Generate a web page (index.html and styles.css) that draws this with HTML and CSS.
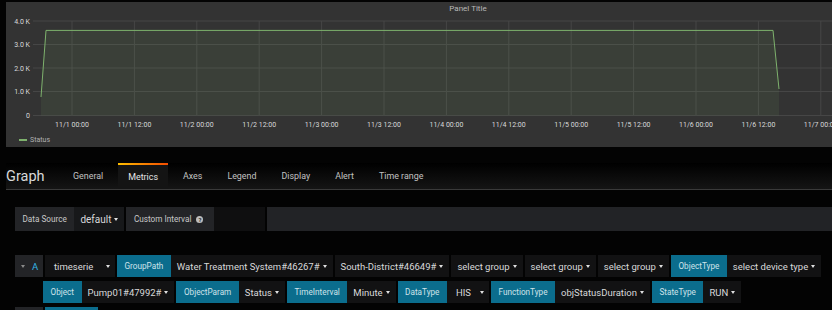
FILE: index.html
```html
<!DOCTYPE html>
<html lang="en">
<head>
    <meta charset="UTF-8">
    <title>Graph - Metrics</title>
    <link rel="stylesheet" href="styles.css">
</head>
<body>
    <div class="panel">
        <div class="panel-title">Panel Title</div>
        <svg class="chart" width="826" height="116" viewBox="0 0 826 116">
            <g class="grid">
                <line x1="27" y1="5" x2="826" y2="5"/>
                <line x1="27" y1="28.5" x2="826" y2="28.5"/>
                <line x1="27" y1="52" x2="826" y2="52"/>
                <line x1="27" y1="75.5" x2="826" y2="75.5"/>
                <line x1="27" y1="99.5" x2="826" y2="99.5"/>
                <line x1="66" y1="5" x2="66" y2="99.5"/>
                <line x1="128.4" y1="5" x2="128.4" y2="99.5"/>
                <line x1="190.8" y1="5" x2="190.8" y2="99.5"/>
                <line x1="253.2" y1="5" x2="253.2" y2="99.5"/>
                <line x1="315.6" y1="5" x2="315.6" y2="99.5"/>
                <line x1="378" y1="5" x2="378" y2="99.5"/>
                <line x1="440.4" y1="5" x2="440.4" y2="99.5"/>
                <line x1="502.8" y1="5" x2="502.8" y2="99.5"/>
                <line x1="565.2" y1="5" x2="565.2" y2="99.5"/>
                <line x1="627.6" y1="5" x2="627.6" y2="99.5"/>
                <line x1="690" y1="5" x2="690" y2="99.5"/>
                <line x1="752.4" y1="5" x2="752.4" y2="99.5"/>
                <line x1="814.8" y1="5" x2="814.8" y2="99.5"/>
            </g>
            <polygon class="series-fill" points="35,99.5 35,81 40,14.4 767,14.4 773,73 773,99.5"/>
            <polyline class="series-line" points="35,81 40,14.4 767,14.4 773,73"/>
            <g class="y-labels">
                <text x="24" y="7.5">4.0 K</text>
                <text x="24" y="31">3.0 K</text>
                <text x="24" y="54.5">2.0 K</text>
                <text x="24" y="78">1.0 K</text>
                <text x="24" y="102">0</text>
            </g>
            <g class="x-labels">
                <text x="66" y="110.5">11/1 00:00</text>
                <text x="128.4" y="110.5">11/1 12:00</text>
                <text x="190.8" y="110.5">11/2 00:00</text>
                <text x="253.2" y="110.5">11/2 12:00</text>
                <text x="315.6" y="110.5">11/3 00:00</text>
                <text x="378" y="110.5">11/3 12:00</text>
                <text x="440.4" y="110.5">11/4 00:00</text>
                <text x="502.8" y="110.5">11/4 12:00</text>
                <text x="565.2" y="110.5">11/5 00:00</text>
                <text x="627.6" y="110.5">11/5 12:00</text>
                <text x="690" y="110.5">11/6 00:00</text>
                <text x="752.4" y="110.5">11/6 12:00</text>
                <text x="814.8" y="110.5">11/7 00:00</text>
            </g>
        </svg>
        <div class="legend"><span class="legend-swatch"></span>Status</div>
    </div>

    <div class="editor">
        <div class="tabs">
            <div class="tabs-title">Graph</div>
            <ul class="tab-list">
                <li>General</li>
                <li class="active">Metrics</li>
                <li>Axes</li>
                <li>Legend</li>
                <li>Display</li>
                <li>Alert</li>
                <li>Time range</li>
            </ul>
        </div>

        <div class="ds-row">
            <div class="gf-pair">
                <span class="gf-label gray">Data Source</span>
                <span class="gf-value ds-value">default <i class="caret"></i></span>
            </div>
            <div class="gf-pair">
                <span class="gf-label gray interval">Custom Interval <span class="info">?</span></span>
                <span class="gf-input"></span>
            </div>
            <div class="gf-filler"></div>
        </div>

        <div class="query">
            <div class="query-row">
                <span class="gf-label gray ref-id"><i class="caret dim"></i><b>A</b></span>
                <span class="gf-value select-wide">timeserie <i class="caret"></i></span>
                <div class="gf-pair">
                    <span class="gf-label">GroupPath</span>
                    <span class="gf-value">Water Treatment System#46267# <i class="caret"></i></span>
                </div>
                <span class="gf-value">South-District#46649# <i class="caret"></i></span>
                <span class="gf-value">select group <i class="caret"></i></span>
                <span class="gf-value">select group <i class="caret"></i></span>
                <span class="gf-value">select group <i class="caret"></i></span>
                <div class="gf-pair">
                    <span class="gf-label">ObjectType</span>
                    <span class="gf-value">select device type <i class="caret"></i></span>
                </div>
            </div>
            <div class="query-row indent">
                <div class="gf-pair">
                    <span class="gf-label">Object</span>
                    <span class="gf-value">Pump01#47992# <i class="caret"></i></span>
                </div>
                <div class="gf-pair">
                    <span class="gf-label">ObjectParam</span>
                    <span class="gf-value">Status <i class="caret"></i></span>
                </div>
                <div class="gf-pair">
                    <span class="gf-label">TimeInterval</span>
                    <span class="gf-value">Minute <i class="caret"></i></span>
                </div>
                <div class="gf-pair">
                    <span class="gf-label">DataType</span>
                    <span class="gf-value select-narrow">HIS <i class="caret"></i></span>
                </div>
                <div class="gf-pair">
                    <span class="gf-label">FunctionType</span>
                    <span class="gf-value">objStatusDuration <i class="caret"></i></span>
                </div>
                <div class="gf-pair">
                    <span class="gf-label">StateType</span>
                    <span class="gf-value">RUN <i class="caret"></i></span>
                </div>
            </div>
            <div class="query-row stub-row">
                <span class="gf-label gray stub"></span>
                <span class="gf-label stub-blue"></span>
            </div>
        </div>
    </div>
</body>
</html>
```

FILE: styles.css
```css
* {
    margin: 0;
    padding: 0;
    box-sizing: border-box;
}

html, body {
    overflow: hidden;
}

body {
    width: 832px;
    height: 310px;
    background-color: #030303;
    color: #d8d9da;
    font-family: Roboto, "Open Sans", sans-serif;
}

/* graph panel */
.panel {
    margin: 2px 0 0 6px;
    height: 145px;
    background: #333333;
    overflow: hidden;
}

.panel-title {
    height: 14px;
    line-height: 14px;
    padding-left: 98px;
    text-align: center;
    font-size: 8px;
    color: #b9b9b9;
}

.chart {
    display: block;
}

.grid line {
    stroke: #464646;
    stroke-width: 1;
}

.series-fill {
    fill: rgba(126, 178, 109, 0.1);
}

.series-line {
    fill: none;
    stroke: #7eb26d;
    stroke-width: 1;
}

.y-labels text,
.x-labels text {
    font-family: Roboto, sans-serif;
    font-size: 7px;
    fill: #d8d9da;
}

.y-labels text {
    text-anchor: end;
}

.x-labels text {
    text-anchor: middle;
}

.legend {
    display: flex;
    align-items: center;
    gap: 3px;
    height: 15px;
    padding-left: 13px;
    font-size: 7px;
    color: #b0b0b0;
}

.legend-swatch {
    width: 8px;
    height: 2px;
    background: #7eb26d;
}

/* editor */
.editor {
    margin-top: 16px;
}

.tabs {
    display: flex;
    align-items: stretch;
    height: 27px;
    margin-left: 6px;
    border-bottom: 1px solid #3a3a3a;
    background: linear-gradient(#000000, #151515);
}

.tabs-title {
    display: flex;
    align-items: center;
    padding-right: 16px;
    font-size: 14.5px;
    color: #d8d9da;
}

.tab-list {
    display: flex;
    list-style: none;
}

.tab-list li {
    display: flex;
    align-items: center;
    margin: 0 2.5px;
    padding: 0 10px;
    font-size: 8.9px;
    color: #c2c2c2;
}

.tab-list li.active {
    background: #141414;
    color: #e6e6e6;
    border-top: 2px solid #f80;
    border-image: linear-gradient(to right, #ffc000, #f34a00) 1;
}

.ds-row {
    display: flex;
    gap: 2px;
    height: 24px;
    margin: 17px 0 0 15px;
}

.gf-pair {
    display: flex;
}

.gf-label {
    display: flex;
    align-items: center;
    padding: 0 7.5px;
    font-size: 8.2px;
    background: #0b6d8d;
    color: #cfe3ea;
}

.gf-label.gray {
    background: #232427;
    color: #c8c8c8;
}

.gf-value {
    display: flex;
    align-items: center;
    gap: 3px;
    padding: 0 6px;
    font-size: 9.5px;
    background: #121213;
    color: #d8d9da;
    white-space: nowrap;
}

.ds-value {
    background: #17181a;
    font-size: 10px;
}

.interval {
    gap: 5px;
    padding-right: 11px;
}

.info {
    width: 7px;
    height: 7px;
    border-radius: 50%;
    background: #bdbdbd;
    color: #232427;
    font-size: 6px;
    font-weight: bold;
    line-height: 7px;
    text-align: center;
}

.gf-input {
    width: 51px;
    background: #0f0f10;
}

.gf-filler {
    flex: 1;
    background: #222326;
}

.caret {
    width: 0;
    height: 0;
    border-left: 2.5px solid transparent;
    border-right: 2.5px solid transparent;
    border-top: 3px solid #e0e0e0;
}

.caret.dim {
    border-top-color: #8a8a8a;
}

.query {
    display: flex;
    flex-direction: column;
    gap: 4px;
    margin: 24px 0 0 15px;
}

.query-row {
    display: flex;
    gap: 2px;
    height: 22px;
}

.query-row.indent {
    margin-left: 28px;
}

.query-row.stub-row {
    height: 3px;
}

.ref-id {
    gap: 7px;
    width: 28px;
    padding: 0 0 0 6px;
}

.ref-id b {
    font-weight: normal;
    font-size: 9.5px;
    color: #33b5e5;
}

.select-wide {
    width: 70px;
    justify-content: space-between;
    padding: 0 5px 0 9px;
}

.select-narrow {
    width: 42px;
    justify-content: space-between;
    padding: 0 5px 0 9px;
}

.stub {
    width: 28px;
}

.stub-blue {
    width: 53px;
}
```
